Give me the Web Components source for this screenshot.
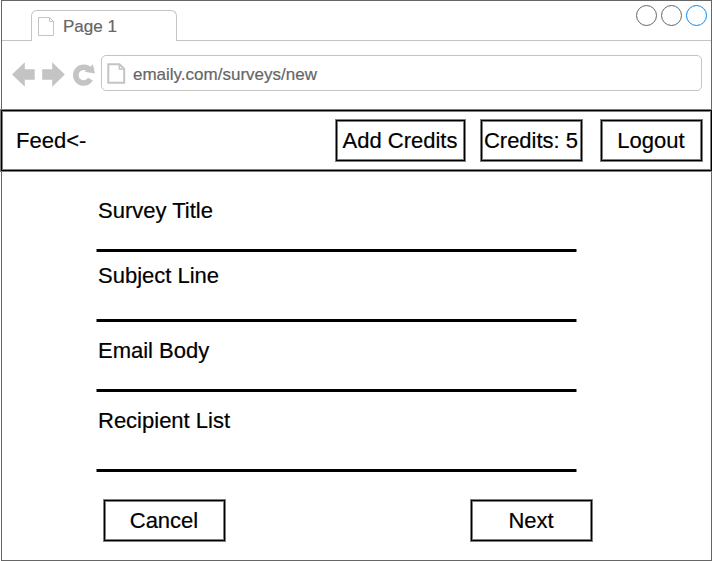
<!DOCTYPE html>
<html lang="en">
<head>
<meta charset="utf-8">
<title>Emaily - New Survey</title>
<style>
html,body{margin:0;background:#fff;overflow:hidden}
body{font-family:"Liberation Sans",Arial,sans-serif;color:#000;-webkit-text-stroke:.2px}
</style>
</head>
<body>
<browser-frame label="Page 1" url="emaily.com/surveys/new">
  <nav-bar>
    <span slot="brand">Feed&lt;-</span>
    <box-button style="--w:131px">Add Credits</box-button>
    <box-button style="--w:103px;margin-left:14px">Credits: 5</box-button>
    <box-button style="--w:103px;margin-left:17px">Logout</box-button>
  </nav-bar>
  <survey-form>
    <form-field style="--top:26px;--h:80px">Survey Title</form-field>
    <form-field style="--top:11px;--h:70px">Subject Line</form-field>
    <form-field style="--top:16px;--h:70px">Email Body</form-field>
    <form-field style="--top:16px;--h:80px">Recipient List</form-field>
    <box-button slot="actions" style="--w:123px">Cancel</box-button>
    <box-button slot="actions" style="--w:123px">Next</box-button>
  </survey-form>
</browser-frame>
<script>
const define = (name, html, init) => {
  const t = document.createElement('template');
  t.innerHTML = html;
  customElements.define(name, class extends HTMLElement {
    constructor() {
      super();
      this.attachShadow({mode: 'open'}).append(t.content.cloneNode(true));
    }
    connectedCallback() { if (init) init(this, this.shadowRoot); }
  });
};

define('browser-tabs', `
<style>
:host{display:flex;height:40px;font-size:17px;color:#666}
.lead{width:29px;box-sizing:border-box;border-bottom:1px solid #c4c4c4}
.tab{box-sizing:border-box;width:146px;height:31px;margin-top:9px;border:1px solid #c4c4c4;border-bottom:0;border-radius:6px 6px 0 0;display:flex;padding:6px 0 0 6px}
.tab svg{flex:none;width:17px;height:19px}
.tab span{line-height:20px;margin-left:8px;}
.rest{flex:1;box-sizing:border-box;border-bottom:1px solid #c4c4c4;display:flex;justify-content:flex-end;gap:4px;padding:4px 4px 0 0}
i{box-sizing:border-box;width:21px;height:21px;border:1px solid #666;border-radius:50%}
i:last-child{border-color:#008cff}
</style>
<div class="lead"></div>
<div class="tab">
<svg viewBox="0 0 17 19" fill="none" stroke="#c4c4c4"><path d="M.5.5h11l4 4v14H.5zM11.5.5v4h4"/></svg>
<span><slot></slot></span></div>
<div class="rest"><i></i><i></i><i></i></div>`);

define('address-bar', `
<style>
:host{display:flex;box-sizing:border-box;height:68px;padding:14px 9px 0 10px;font-size:17px;color:#666}
.nav{flex:none;width:84px;height:26px;margin-top:6px}
.box{box-sizing:border-box;margin-left:5px;flex:1;height:36px;border:1px solid #c4c4c4;border-radius:5px;display:flex;padding:7px 0 0 5px}
.box svg{flex:none;width:19px;height:21px}
.box span{line-height:20px;margin-left:7px;margin-top:2px}
</style>
<svg class="nav" viewBox="12 61 84 26" fill="#c4c4c4">
<path d="M12 74.5 24.8 62.2v7.1h9.9v10.4h-9.9v7z"/>
<path d="M64.8 74.5 52.2 62.2v7.1h-10v10.4h10v7z"/>
<path d="M90.5 79.1a7.9 7.9 0 1 1-.7-9" fill="none" stroke="#c4c4c4" stroke-width="5.6"/>
<path d="M93 64.2 94.9 73.4 84.6 71.8z"/>
</svg>
<div class="box">
<svg viewBox="107 63 19 21" fill="none" stroke="#c4c4c4"><path stroke-width="2" d="M108.3 64.3h11.2l4.7 4.7v13.7h-15.9z"/><path stroke-width="1.4" d="M119.3 64v5h5"/></svg>
<span><slot></slot></span></div>`);

define('browser-frame', `
<style>
:host{display:block;box-sizing:border-box;width:711px;height:561px;margin-left:1px;border:1px solid #666}
</style>
<browser-tabs></browser-tabs><address-bar></address-bar><slot></slot>`, (el, root) => {
  root.querySelector('browser-tabs').textContent = el.getAttribute('label');
  root.querySelector('address-bar').textContent = el.getAttribute('url');
});

define('nav-bar', `
<style>
:host{display:flex;box-sizing:border-box;width:713px;height:63px;margin-left:-2px;padding:9px 9px 0 15px;border:1px solid #808080;box-shadow:inset 0 0 0 1px #000,inset 0 0 0 2px #808080;font-size:22px;line-height:43px}
.brand{flex:1}
</style>
<div class="brand"><slot name="brand"></slot></div><slot></slot>`);

define('box-button', `
<style>
:host{display:block;box-sizing:border-box;width:var(--w);height:43px;padding-right:1px;border:1px solid #808080;box-shadow:inset 0 0 0 1px #000,inset 0 0 0 2px #808080;font-size:22px;line-height:41px;text-align:center;white-space:nowrap}
</style><slot></slot>`);

define('form-field', `
<style>
:host{display:flex;flex-direction:column;box-sizing:border-box;height:var(--h);padding-top:var(--top);font-size:22px;line-height:26px}
.label{padding-left:2px;flex:1}
.line{height:3px;background:#000;border:solid #808080;border-width:0 1px}
</style><div class="label"><slot></slot></div><div class="line"></div>`);

define('survey-form', `
<style>
:host{display:block;width:481px;margin-left:94px}
.actions{display:flex;justify-content:space-between;width:490px;margin:27px 0 0 7px}
</style><slot></slot><div class="actions"><slot name="actions"></slot></div>`);
</script>
</body>
</html>
